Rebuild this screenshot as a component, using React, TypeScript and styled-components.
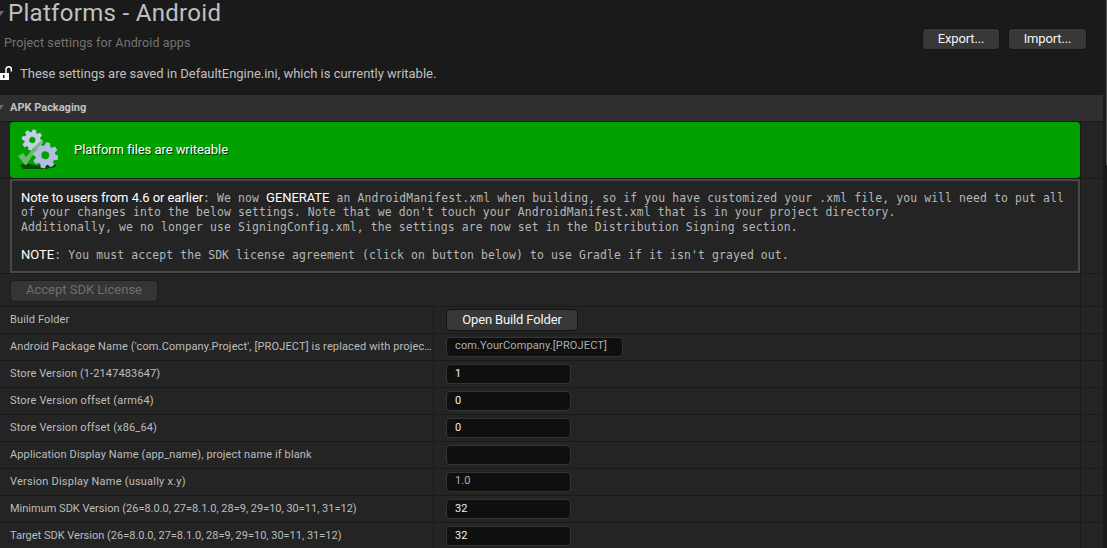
import React from "react";
import styled, { createGlobalStyle } from "styled-components";

const GlobalStyle = createGlobalStyle`
  * { box-sizing: border-box; }
  body {
    margin: 0;
    background: #1a1a1a;
    color: #c0c0c0;
    font-family: Roboto, "Liberation Sans", sans-serif;
    overflow: hidden;
  }
`;

const Page = styled.div`
  display: flex;
  width: 1107px;
  height: 548px;
  overflow: hidden;
`;

const Content = styled.main`
  width: 1103px;
  flex: none;
`;

const ScrollTrack = styled.div`
  width: 4px;
  padding-left: 3px;
`;

const ScrollThumb = styled.div`
  height: 165px;
  background: #575757;
`;

const Header = styled.header`
  display: flex;
  justify-content: space-between;
  height: 95px;
`;

const TitleRow = styled.div`
  display: flex;
  align-items: center;
  height: 26px;
`;

const Caret = styled.svg`
  display: block;
  flex: none;
  width: 4px;
  height: 5px;
  fill: #6c6c6c;
`;

const Title = styled.h1`
  margin: 0 0 0 4px;
  font-size: 24px;
  font-weight: 400;
  line-height: 26px;
  letter-spacing: 0.31px;
  white-space: nowrap;
`;

const Subtitle = styled.p`
  margin: 9px 0 0 4px;
  font-size: 12.5px;
  line-height: 16px;
  letter-spacing: 0.11px;
  color: #757575;
`;

const Status = styled.div`
  display: flex;
  align-items: center;
  height: 20px;
  margin-top: 12px;
  font-size: 13px;
  letter-spacing: -0.015px;
  white-space: nowrap;
`;

const LockIcon = styled.svg`
  display: block;
  width: 13px;
  height: 16px;
  margin-right: 7px;
`;

const HeaderActions = styled.div`
  display: flex;
  gap: 8px;
  padding: 28px 16px 0 0;
`;

const Button = styled.button<{ $width: number; $spacing?: number }>`
  width: ${(p) => p.$width}px;
  height: 22px;
  padding: 0 0 1px;
  border: 1px solid #131313;
  border-radius: 4px;
  background: #383838;
  color: #f4f4f4;
  font: 400 13px/18px Roboto, "Liberation Sans", sans-serif;
  letter-spacing: ${(p) => p.$spacing ?? 0}px;
  white-space: nowrap;

  &:disabled {
    border-color: #1b1b1b;
    background: #353535;
    color: #6e6e6e;
  }
`;

const SectionHeader = styled.div`
  display: flex;
  align-items: center;
  height: 27px;
  border-bottom: 1px solid #1a1a1a;
  background: #2f2f2f;
  font-size: 11px;
  font-weight: 700;
  padding-bottom: 1px;
  span { margin-left: 6px; letter-spacing: 0; }
`;

const Row = styled.div<{ $height: number }>`
  display: flex;
  height: ${(p) => p.$height}px;
  border-bottom: 1px solid #1a1a1a;
  background: #242424;
`;

const WideCell = styled.div`
  display: flex;
  width: 1081px;
  padding-left: 10px;
  border-right: 1px solid #1a1a1a;
`;

const LabelCell = styled.div`
  width: 434px;
  padding: 0 1px 1px 10px;
  border-right: 1px solid #1a1a1a;
  font-size: 11px;
  line-height: 25px;
  color: #bdbdbd;
`;

const Label = styled.span<{ $spacing: number }>`
  display: block;
  letter-spacing: ${(p) => p.$spacing}px;
  white-space: nowrap;
`;

const ValueCell = styled.div`
  display: flex;
  align-items: center;
  width: 647px;
  padding-left: 12px;
  border-right: 1px solid #1a1a1a;
`;

const Field = styled.div<{ $width: number; $muted: boolean }>`
  width: ${(p) => p.$width}px;
  height: 20px;
  padding-left: 8px;
  border: 1px solid #343434;
  border-radius: 4px;
  background: #0f0f0f;
  color: ${(p) => (p.$muted ? "#adadad" : "#f0f0f0")};
  font-size: 11px;
  line-height: ${(p) => (p.$muted ? 15 : 17)}px;
  letter-spacing: 0.13px;
`;

const Banner = styled.div`
  display: flex;
  align-items: center;
  width: 1070px;
  height: 56px;
  padding-left: 8px;
  border-radius: 4px;
  background: #00a200;
  color: #fff;
  font-size: 13px;
  text-shadow: 1px 1px 0 #063506;
  span { margin: 0 0 2px 16px; letter-spacing: -0.06px; }
`;

const BannerIcon = styled.svg`
  display: block;
  width: 40px;
  height: 42px;
`;

const NoteBox = styled.div`
  width: 1070px;
  height: 94px;
  padding: 10px 0 0 9px;
  border: 2px solid #484848;
  color: #b7b7b7;
  font-family: "DejaVu Sans Mono", monospace;
  font-size: 11.4px;
  letter-spacing: 0.139px;
  line-height: 14.25px;
`;

const NoteLine = styled.div`
  height: 14.25px;
  white-space: pre;
`;

const Strong = styled.strong<{ $spacing?: number }>`
  color: #fff;
  font: 400 13px/14px Roboto, "Liberation Sans", sans-serif;
  letter-spacing: ${(p) => p.$spacing ?? 0}px;
`;

const SdkRow = styled.div`
  padding-top: 5px;
`;

const GEAR_TEETH = [0, 45, 90, 135, 180, 225, 270, 315];

function Gear({ x, y, r, fill }: { x: number; y: number; r: number; fill: string }) {
  return (
    <g transform={`translate(${x} ${y}) rotate(12)`}>
      {GEAR_TEETH.map((a) => (
        <path
          key={a}
          transform={`rotate(${a})`}
          d={`M${-r * 0.26} ${-r * 0.6}L${-r * 0.16} ${-r}H${r * 0.16}L${r * 0.26} ${-r * 0.6}Z`}
          fill={fill}
        />
      ))}
      <circle r={r * 0.53} fill="none" stroke={fill} strokeWidth={r * 0.46} />
    </g>
  );
}

function CollapseCaret() {
  return (
    <Caret viewBox="0 0 4 5">
      <path d="M0 0H4L0 5Z" />
    </Caret>
  );
}

type Setting = { label: string; value: string; muted?: boolean; width?: number; spacing?: number };

const SETTINGS: Setting[] = [
  {
    label: "Android Package Name ('com.Company.Project', [PROJECT] is replaced with projec…",
    value: "com.YourCompany.[PROJECT]",
    muted: true,
    width: 177,
    spacing: 0.14,
  },
  { label: "Store Version (1-2147483647)", value: "1", spacing: 0.12 },
  { label: "Store Version offset (arm64)", value: "0", spacing: 0.16 },
  { label: "Store Version offset (x86_64)", value: "0", spacing: 0.15 },
  { label: "Application Display Name (app_name), project name if blank", value: "", spacing: 0.13 },
  { label: "Version Display Name (usually x.y)", value: "1.0", muted: true, spacing: 0.22 },
  { label: "Minimum SDK Version (26=8.0.0, 27=8.1.0, 28=9, 29=10, 30=11, 31=12)", value: "32", spacing: 0 },
  { label: "Target SDK Version (26=8.0.0, 27=8.1.0, 28=9, 29=10, 30=11, 31=12)", value: "32", spacing: 0 },
];

export default function App() {
  return (
    <>
      <GlobalStyle />
      <Page>
        <Content>
          <Header>
            <div>
              <TitleRow>
                <CollapseCaret />
                <Title>Platforms - Android</Title>
              </TitleRow>
              <Subtitle>Project settings for Android apps</Subtitle>
              <Status>
                <LockIcon viewBox="0 0 13 16">
                  <path d="M0 8H9V15H0Z" fill="#fff" />
                  <path d="M6 8V4.5C6 2.6 7 1.8 8.7 1.8S11.3 2.7 11.3 4.2V6.5" fill="none" stroke="#fff" strokeWidth="1.5" />
                  <path d="M3 10H4.5V13H3Z" fill="#1a1a1a" />
                </LockIcon>
                These settings are saved in DefaultEngine.ini, which is currently writable.
              </Status>
            </div>
            <HeaderActions>
              <Button $width={78} $spacing={-0.15}>Export...</Button>
              <Button $width={79} $spacing={-0.15}>Import...</Button>
            </HeaderActions>
          </Header>

          <SectionHeader>
            <CollapseCaret />
            <span>APK Packaging</span>
          </SectionHeader>

          <Row $height={57}>
            <WideCell>
              <Banner>
                <BannerIcon viewBox="0 0 40 42">
                  <path d="M2 36L8 34L19 37L27 34L39 36L37 38L28 40H5Z" fill="#064806" />
                  <Gear x={14.3} y={11} r={10.5} fill="#c5cde8" />
                  <Gear x={27.3} y={26.3} r={13} fill="#b3bce0" />
                  <path d="M0 27L5 24L8 28C14 21 19 14 24.5 11L25 12.5C19 20 13 28 8.5 36H7Z" fill="#74bb78" fillOpacity=".92" />
                </BannerIcon>
                <span>Platform files are writeable</span>
              </Banner>
            </WideCell>
          </Row>

          <Row $height={95}>
            <WideCell>
              <NoteBox>
                <NoteLine>
                  <Strong $spacing={-0.06}>Note to users from 4.6 or earlier</Strong>
                  {": We now "}
                  <Strong $spacing={-0.05}>GENERATE</Strong>
                  {" an AndroidManifest.xml when building, so if you have customized your .xml file, you will need to put all"}
                </NoteLine>
                <NoteLine>of your changes into the below settings. Note that we don't touch your AndroidManifest.xml that is in your project directory.</NoteLine>
                <NoteLine>Additionally, we no longer use SigningConfig.xml, the settings are now set in the Distribution Signing section.</NoteLine>
                <NoteLine />
                <NoteLine>
                  <Strong>NOTE</Strong>
                  {": You must accept the SDK license agreement (click on button below) to use Gradle if it isn't grayed out."}
                </NoteLine>
              </NoteBox>
            </WideCell>
          </Row>

          <Row $height={33}>
            <WideCell>
              <SdkRow>
                <Button $width={148} disabled>Accept SDK License</Button>
              </SdkRow>
            </WideCell>
          </Row>

          <Row $height={27}>
            <LabelCell>
              <Label $spacing={0.12}>Build Folder</Label>
            </LabelCell>
            <ValueCell>
              <Button $width={132} $spacing={-0.14}>Open Build Folder</Button>
            </ValueCell>
          </Row>

          {SETTINGS.map((s) => (
            <Row key={s.label} $height={27}>
              <LabelCell>
                <Label $spacing={s.spacing ?? 0.2}>{s.label}</Label>
              </LabelCell>
              <ValueCell>
                <Field $width={s.width ?? 125} $muted={!!s.muted}>{s.value}</Field>
              </ValueCell>
            </Row>
          ))}
        </Content>
        <ScrollTrack>
          <ScrollThumb />
        </ScrollTrack>
      </Page>
    </>
  );
}
